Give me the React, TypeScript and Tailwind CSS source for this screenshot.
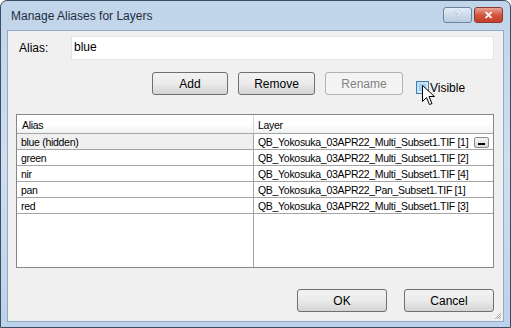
import React from 'react';

type Row = { alias: string; layer: string };

const rows: Row[] = [
  { alias: 'blue (hidden)', layer: 'QB_Yokosuka_03APR22_Multi_Subset1.TIF [1]' },
  { alias: 'green', layer: 'QB_Yokosuka_03APR22_Multi_Subset1.TIF [2]' },
  { alias: 'nir', layer: 'QB_Yokosuka_03APR22_Multi_Subset1.TIF [4]' },
  { alias: 'pan', layer: 'QB_Yokosuka_03APR22_Pan_Subset1.TIF [1]' },
  { alias: 'red', layer: 'QB_Yokosuka_03APR22_Multi_Subset1.TIF [3]' },
];

const btn =
  'flex items-center justify-center h-[23px] rounded-[3px] border border-[#707070] bg-gradient-to-b from-[#f2f2f2] via-[#ebebeb] to-[#d4d4d4] text-[12px] text-black';

function Cursor() {
  return (
    <svg width="14" height="22" viewBox="0 0 14 22" className="absolute left-[422px] top-[85px]">
      <path
        d="M0.5 0.5 L0.5 16.5 L4.5 12.5 L7.5 19.5 L10 18.5 L7 11.5 L12.5 11.5 Z"
        fill="#fff"
        stroke="#000"
        strokeWidth="1"
        strokeLinejoin="miter"
      />
    </svg>
  );
}

export default function App() {
  return (
    <div className="relative w-[511px] h-[328px] bg-white" style={{ fontFamily: '"Liberation Sans", Arial, sans-serif' }}>
      <div className="flex flex-col w-[511px] h-[328px] rounded-t-[7px] border border-[#3a4d63] bg-gradient-to-b from-[#c0d4ea] via-[#cfdff0] to-[#bcd2ea]">
        {/* title bar */}
        <div className="flex items-center justify-between h-[29px] pl-[10px] pr-[7px]">
          <span className="text-[12px] text-[#1e2d3d]">Manage Aliases for Layers</span>
          <div className="flex gap-[2px] -mt-[1px]">
            <div className="flex items-center justify-center w-[29px] h-[16px] rounded-[3px] border border-[#6d829c] bg-gradient-to-b from-[#e3ecf6] to-[#b8cce2] text-[11px] font-bold text-white [text-shadow:0_0_1px_#4a5c72]">
              ?
            </div>
            <div className="flex items-center justify-center w-[29px] h-[16px] rounded-[3px] border border-[#8b3a32] bg-gradient-to-b from-[#e8a596] via-[#d2553f] to-[#c5412c] text-[11px] font-bold text-white">
              ✕
            </div>
          </div>
        </div>

        {/* client area */}
        <div className="flex flex-col mx-[6px] h-[292px] border border-[#94aac4] bg-[#f0f0f0]">
          <div className="flex items-center h-[24px] mt-[5px]">
            <span className="w-[63px] pl-[11px] text-[12px] text-black">Alias:</span>
            <div className="flex items-start w-[423px] h-[24px] border border-[#e2e6ea] bg-white pl-[2px] pt-[1px] text-[12px] text-black">
              blue
            </div>
          </div>

          <div className="flex items-start h-[23px] mt-[12px] pl-[144px]">
            <div className={`${btn} w-[76px] border-[#3c7fb1] from-[#eaf6fd] via-[#d9f0fc] to-[#a7d9f5]`}>Add</div>
            <div className={`${btn} w-[77px] ml-[10px]`}>Remove</div>
            <div className="flex items-center justify-center w-[78px] h-[23px] ml-[10px] rounded-[3px] border border-[#adb2b5] bg-[#f4f4f4] text-[12px] text-[#838383]">
              Rename
            </div>
            <div className="flex items-center h-[13px] leading-none mt-[9px] ml-[13px]">
              <div className="w-[13px] h-[13px] border border-[#3c7fb1] bg-gradient-to-br from-[#b9dcf6] to-[#e3f1fb] p-[2px]">
                <div className="w-full h-full bg-[#a6cdef]" />
              </div>
              <span className="ml-[1px] text-[12px] text-black">Visible</span>
            </div>
          </div>

          {/* list */}
          <div className="flex flex-col ml-[8px] mt-[19px] w-[478px] h-[154px] border border-[#828790] bg-white text-[10.5px] tracking-[-0.3px] text-black">
            <div className="flex h-[19px] border-b border-[#a5a5a5] bg-gradient-to-b from-white via-white to-[#f1f2f4]">
              <div className="w-[237px] pl-[5px] pt-[3px] border-r border-[#d5d5d5]">Alias</div>
              <div className="flex-1 pl-[4px] pt-[3px]">Layer</div>
            </div>
            {rows.map((r, i) => (
              <div key={r.alias} className="flex h-[16px] border-b border-[#a5a5a5]">
                <div className={`w-[237px] pl-[4px] pt-[1px] border-r border-[#a5a5a5] ${i === 0 ? 'bg-[#f0f0f0]' : ''}`}>
                  {r.alias}
                </div>
                <div className="flex items-start flex-1 w-0 pl-[4px] pt-[1px]">
                  <span className="w-[216px] whitespace-nowrap">{r.layer}</span>
                  {i === 0 && (
                    <div className="flex items-end justify-center w-[15px] h-[11px] mt-[2px] rounded-[2px] border border-[#8b8b8b] bg-gradient-to-b from-[#f5f5f5] to-[#d8d8d8] pb-[2px]">
                      <div className="w-[7px] h-[2px] bg-black" />
                    </div>
                  )}
                </div>
              </div>
            ))}
            <div className="flex flex-1">
              <div className="w-[237px] border-r border-[#a5a5a5]" />
            </div>
          </div>

          <div className="flex justify-end gap-[17px] mt-[21px] pr-[9px]">
            <div className={`${btn} w-[90px]`}>OK</div>
            <div className={`${btn} w-[90px]`}>Cancel</div>
          </div>

          <div className="flex justify-end flex-1 items-end pr-[1px] pb-[1px]">
            <svg width="8" height="8" viewBox="0 0 8 8">
              <path d="M7 1 L1 7 M7 3 L3 7 M7 5 L5 7" stroke="#a8a8a8" strokeWidth="1" />
            </svg>
          </div>
        </div>
      </div>
      <Cursor />
    </div>
  );
}
